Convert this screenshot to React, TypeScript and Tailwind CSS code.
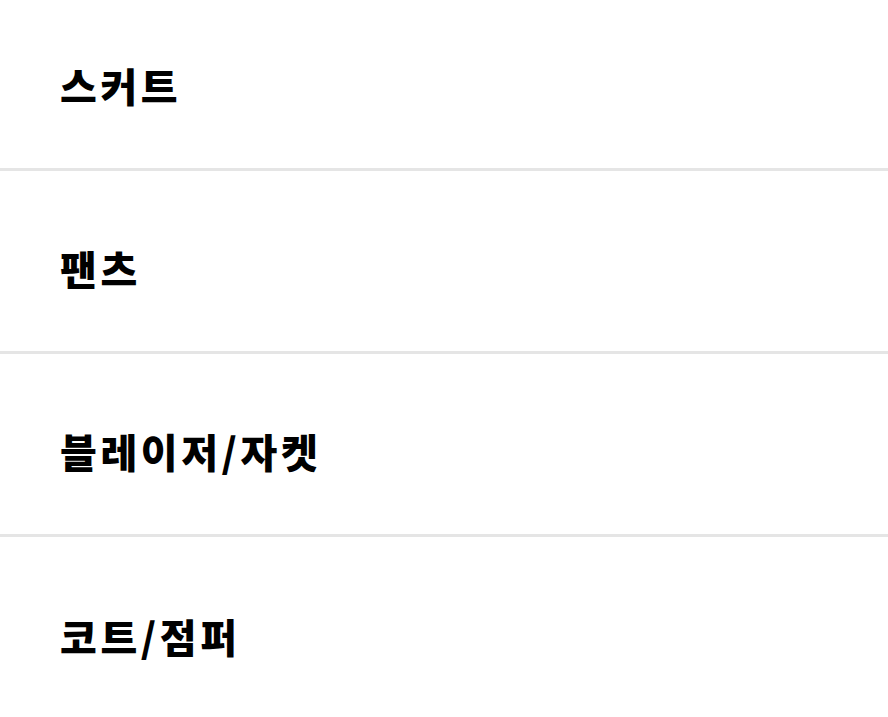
const categories = ["스커트", "팬츠", "블레이저/자켓", "코트/점퍼"];

export default function App() {
  return (
    <div className="h-[717px] w-full overflow-hidden bg-white font-['Noto_Sans_CJK_KR','Noto_Sans',sans-serif]">
      <ul className="-mt-3">
        {categories.map((name, i) => (
          <li
            key={name}
            className={`flex h-[183px] items-center pl-[60px] pt-[14px] ${
              i < categories.length - 1 ? "border-b-[3px] border-[#e5e5e5]" : ""
            }`}
          >
            <span className="text-[40px] font-black leading-none tracking-[3.6px] text-black">{name}</span>
          </li>
        ))}
      </ul>
    </div>
  );
}
